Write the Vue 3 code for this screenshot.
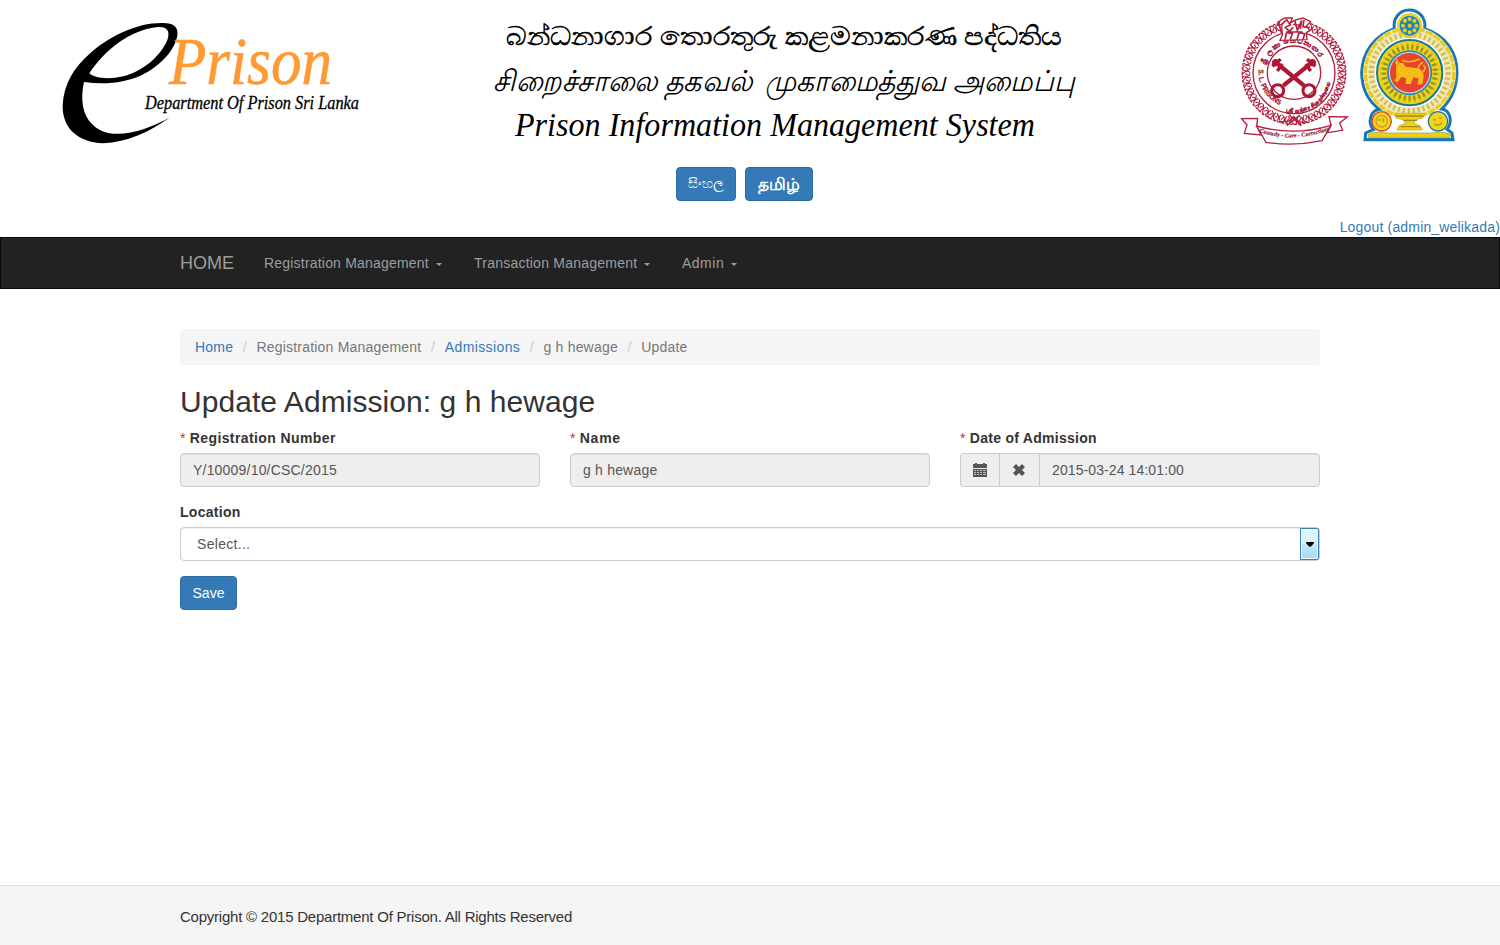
<script setup>
const menus = [
  { label: 'Registration Management', cls: 'm-reg' },
  { label: 'Transaction Management', cls: 'm-tra' },
  { label: 'Admin', cls: 'm-adm' },
]
const crumbs = [
  { label: 'Home', link: true },
  { label: 'Registration Management' },
  { label: 'Admissions', link: true },
  { label: 'g h hewage' },
  { label: 'Update' },
]
const leaves = Array.from({ length: 44 }, (_, i) => -68 + i * (316 / 43))
const petals = Array.from({ length: 8 }, (_, i) => i * 45)
</script>

<template>
  <div class="page">
    <svg class="banner" viewBox="0 0 1500 160" width="1500" height="160">
      <!-- ePrison logo -->
      <g transform="translate(50 10) scale(.33333)">
        <path fill-rule="evenodd" d="M360 322 C300 366 232 397 160 400 C82 398 36 352 38 286 C41 222 72 172 118 132 C177 79 258 39 335 39 C371 38 386 51 382 77 C374 123 329 168 276 195 C225 219 163 225 102 216 C87 286 104 337 154 362 C210 386 292 361 360 322 Z M118 190 C166 117 244 60 318 52 C350 48 362 62 352 90 C333 137 279 184 220 199 C176 209 137 206 118 190 Z" />
      </g>
      <text x="169" y="84" class="serif it" font-size="68" fill="#f93" stroke="#f93" stroke-width=".6" textLength="163" lengthAdjust="spacingAndGlyphs">Prison</text>
      <text x="145" y="109" class="serif it" font-size="19" stroke="#000" stroke-width=".3" textLength="214" lengthAdjust="spacingAndGlyphs">Department Of Prison Sri Lanka</text>

      <!-- Title in three languages -->
      <text x="506" y="45" class="serif" font-size="26" stroke="#000" stroke-width=".6" textLength="556" lengthAdjust="spacingAndGlyphs">බන්ධනාගාර තොරතුරු කළමනාකරණ පද්ධතිය</text>
      <text x="493" y="91" class="serif it" font-size="29" textLength="260" lengthAdjust="spacingAndGlyphs">சிறைச்சாலை தகவல்</text>
      <text x="765" y="91" class="serif it" font-size="29" textLength="310" lengthAdjust="spacingAndGlyphs">முகாமைத்துவ அமைப்பு</text>
      <text x="515" y="136" class="serif it" font-size="33" textLength="520" lengthAdjust="spacingAndGlyphs">Prison Information Management System</text>

      <!-- Prisons department crest -->
      <g transform="translate(1230 0) scale(.33333)" fill="none" stroke="#b3203f">
        <circle cx="192" cy="218" r="155" stroke-width="4" stroke-dasharray="9 4" />
        <circle cx="192" cy="218" r="123" stroke-width="4" />
        <g stroke-width="3.4">
          <path v-for="a in leaves" :key="a" :transform="`rotate(${a} 192 218)`" d="M323 228 Q332 214 346 222 M324 214 Q336 224 348 206 M330 206 L338 211" />
        </g>
        <circle cx="192" cy="218" r="80" stroke-width="4" />
        <g stroke="#b01632">
          <g stroke-width="13">
            <path d="M134 184 L222 257 M250 184 L160 257" />
            <path d="M127 199 L152 178 M142 213 L157 192 M256 199 L231 178 M242 213 L227 192" stroke-width="10" />
          </g>
          <circle cx="237" cy="272" r="18" stroke-width="9" />
          <circle cx="143" cy="272" r="18" stroke-width="9" />
          <circle cx="137" cy="188" r="7" stroke-width="8" />
          <circle cx="247" cy="188" r="7" stroke-width="8" />
        </g>
        <path id="arcTop" d="M107 194 A88 88 0 0 1 280 220" stroke="none" />
        <path id="arcLeft" d="M86 209 A106 106 0 0 0 164 320" stroke="none" />
        <path id="arcBottom" d="M168 336 A114 114 0 0 0 304 224" stroke="none" />
        <g fill="#a81c38" stroke="#a81c38" stroke-width=".8" class="sans" font-weight="700">
          <text font-size="21"><textPath href="#arcTop" textLength="205">ශ්‍රී ලංකා බන්ධනාගාර</textPath></text>
          <text font-size="22"><textPath href="#arcLeft" textLength="132" lengthAdjust="spacingAndGlyphs">S. L. PRISONS</textPath></text>
          <text font-size="17"><textPath href="#arcBottom" textLength="178" lengthAdjust="spacingAndGlyphs">ஸ்ரீ லங்கா சிறைச்சாலை</textPath></text>
        </g>
        <path fill="#fff" stroke-width="4" d="M150 121 L157 106 L155 73 L143 76 L151 61 L165 54 L187 54 L181 69 L195 60 L219 54 L242 65 L229 78 L240 91 L229 98 L231 119 Z" />
        <path stroke-width="5" d="M144 63 L155 100 M155 73 L170 59 L181 74 L166 82 L178 94 L190 82 M194 61 L202 91 L215 61 L211 87 M222 60 L219 80 L236 83 M165 119 L170 97 L187 101 L181 119 M201 119 L207 98 L224 101 L219 119 M170 96 H218 M190 74 L208 75" />
        <path stroke-width="4" d="M170 377 L209 345 M178 345 L214 378 M153 364 Q178 371 191 350 Q207 374 232 364" />
        <path fill="#fff" stroke-width="4" d="M83 355 L35 356 L51 375 L43 400 L93 405 L80 378 Z M297 350 L352 351 L329 369 L338 391 L291 398 L303 376 Z" />
        <path fill="#fff" stroke-width="4" d="M80 378 L108 427 Q192 440 276 422 L303 376 Q192 410 80 378 Z" />
        <path id="motto" d="M88 396 Q192 433 310 386" stroke="none" />
        <text fill="#911b33" stroke="#911b33" stroke-width=".5" class="serif" font-weight="700" font-size="17.5"><textPath href="#motto">Custody - Care - Corrections</textPath></text>
      </g>

      <!-- State emblem -->
      <g transform="translate(1230 0) scale(.33333)" fill="none">
        <path fill="#fff" stroke="#1976b5" stroke-width="9" d="M493 86 C488 55 509 30 537 30 C567 30 589 54 584 86 C648 107 682 158 681 218 C680 264 663 300 635 327 C663 332 668 367 651 388 L666 399 L669 419 H405 L407 399 L430 389 C412 367 421 331 449 328 C415 304 396 266 395 218 C397 157 433 107 493 86 Z" />
        <circle cx="539" cy="218" r="122" stroke="#efe7b6" stroke-width="34" />
        <circle cx="539" cy="218" r="133" stroke="#e9cb24" stroke-width="10" stroke-dasharray="22 4" />
        <circle cx="539" cy="218" r="115" stroke="#d3b84c" stroke-width="16" stroke-dasharray="6 9" />
        <circle cx="539" cy="218" r="98" fill="#f2d412" stroke="#157c91" stroke-width="6" />
        <circle cx="539" cy="218" r="79" stroke="#96922c" stroke-width="19" stroke-dasharray="7 8" />
        <circle cx="539" cy="218" r="86" stroke="#efd52a" stroke-width="3" />
        <circle cx="539" cy="218" r="61" fill="#e8442d" stroke="#b8dbe8" stroke-width="4" />
        <circle cx="539" cy="218" r="65" stroke="#2581bb" stroke-width="5" />
        <path fill="#f6bd16" d="M500 205 L507 190 L518 188 L527 200 L563 205 Q581 211 581 230 L577 253 L562 254 L566 235 L550 232 L542 252 L526 252 L529 235 L514 230 L503 247 L493 242 L505 222 L500 214 Z" />
        <path stroke="#f3b718" stroke-width="5" d="M501 229 V178 M495 188 H509 M516 180 Q535 192 569 177 M565 207 Q565 194 578 187 M578 216 Q591 205 580 195" />
        <circle cx="539" cy="77" r="34" fill="#1f83bd" stroke="#ead128" stroke-width="8" />
        <circle cx="539" cy="77" r="6" fill="#e4cb2c" />
        <circle v-for="p in petals" :key="p" cx="539" cy="57" r="6" fill="#edcd24" :transform="`rotate(${p} 539 77)`" />
        <path fill="#f0d015" stroke="#c0a618" stroke-width="2" d="M494 340 H584 L578 354 L557 359 L552 369 L572 379 L577 390 H501 L506 378 L527 369 L519 359 L499 354 Z" />
        <path stroke="#9d8c20" stroke-width="4" d="M498 348 H580 M520 361 H561 M512 380 H569" />
        <circle cx="455" cy="364" r="29" fill="#f3d61a" stroke="#cf4734" stroke-width="4" />
        <circle cx="455" cy="364" r="17" stroke="#d39b20" stroke-width="4" />
        <circle cx="624" cy="364" r="29" fill="#f3d61a" stroke="#1974a6" stroke-width="4" />
        <path stroke="#ba9b1d" stroke-width="5" d="M610 359 H618 M627 354 H636 M613 373 Q626 380 637 368 M445 360 H453 M460 355 V367" />
        <path fill="#edcf18" stroke="#8f9a35" stroke-width="2" d="M414 404 Q433 393 473 399 H604 Q643 393 661 404 L660 412 H415 Z" />
        <path stroke="#1976b5" stroke-width="6" d="M404 418 H671" />
      </g>
    </svg>

    <div class="langs">
      <button class="btn si">සිංහල</button>
      <button class="btn ta">தமிழ்</button>
    </div>
    <div class="logout"><a>Logout (admin_welikada)</a></div>

    <nav class="navbar">
      <a class="brand">HOME</a>
      <a v-for="m in menus" :key="m.label" class="menu" :class="m.cls"><span>{{ m.label }}</span><i class="caret"></i></a>
    </nav>

    <main class="container">
      <ol class="breadcrumb">
        <li v-for="(c, i) in crumbs" :key="c.label" :class="'c' + i"><a v-if="c.link">{{ c.label }}</a><span v-else>{{ c.label }}</span></li>
      </ol>
      <h2><span>Update Admission: g h hewage</span></h2>
      <div class="row">
        <div class="group">
          <label><em>*</em> <span class="l-reg">Registration Number</span></label>
          <div class="control ro"><span>Y/10009/10/CSC/2015</span></div>
        </div>
        <div class="group">
          <label><em>*</em> <span class="l-name">Name</span></label>
          <div class="control ro"><span>g h hewage</span></div>
        </div>
        <div class="group">
          <label><em>*</em> <span class="l-date">Date of Admission</span></label>
          <div class="input-group">
            <span class="addon">
              <svg width="14" height="15" viewBox="0 0 14 15" shape-rendering="crispEdges">
                <path fill="#555" d="M0 1H2V0H4V1H10V0H12V1H14V5H0ZM0 6H14V14H0Z" />
                <path fill="#bbb" d="M1 7H3V8H1ZM4 7H6V8H4ZM7 7H9V8H7ZM10 7H13V8H10ZM1 9H3V10H1ZM4 9H6V10H4ZM7 9H9V10H7ZM10 9H13V10H10ZM1 11H3V12H1ZM4 11H6V12H4ZM7 11H9V12H7ZM10 11H13V12H10Z" />
              </svg>
            </span>
            <span class="addon">
              <svg width="12" height="12" viewBox="0 0 12 12"><path fill="#555" d="M3 0 6 3 9 0 12 3 9 6 12 9 9 12 6 9 3 12 0 9 3 6 0 3Z" /></svg>
            </span>
            <div class="control ro date"><span>2015-03-24 14:01:00</span></div>
          </div>
        </div>
      </div>
      <div class="group">
        <label><span class="l-loc">Location</span></label>
        <div class="control select"><span>Select...</span><span class="arrow"><svg width="8" height="5" viewBox="0 0 8 5"><path d="M0 0H8V1L5 4.5H3L0 1Z" /></svg></span></div>
      </div>
      <button class="btn save"><span>Save</span></button>
    </main>

    <footer><p>Copyright © 2015 Department Of Prison. All Rights Reserved</p></footer>
  </div>
</template>

<style>
body { margin: 0; background: #fff; }
</style>

<style scoped>
.page { width: 1500px; height: 945px; display: flex; flex-direction: column; overflow: hidden; font: 14px/20px "Liberation Sans", Arial, sans-serif; color: #333; }
.page * { box-sizing: border-box; }
.banner { display: block; flex: none; }
.serif { font-family: "Liberation Serif", serif; }
.sans { font-family: "Liberation Sans", sans-serif; }
.it { font-style: italic; }
a { color: #337ab7; text-decoration: none; }
.langs { display: flex; justify-content: center; gap: 9px; height: 57px; padding: 7px 11px 0 0; }
.btn { height: 34px; padding: 0; border: 1px solid #2e6da4; border-radius: 4px; background: #337ab7; color: #fff; font: 14px/20px "Liberation Sans", sans-serif; }
.si { width: 60px; font-size: 13.5px; }
.ta { width: 68px; font-size: 16.5px; font-weight: 700; }
.logout { height: 20px; text-align: right; letter-spacing: .17px; white-space: nowrap; }
.navbar { display: flex; align-items: center; height: 52px; flex: none; padding-left: 179px; background: #222; border: 1px solid #080808; color: #9d9d9d; }
.navbar a { color: #9d9d9d; }
.brand { width: 84px; font-size: 18px; }
.menu { display: flex; align-items: center; letter-spacing: .5px; }
.m-reg { width: 210px; letter-spacing: .2px; }
.m-tra { width: 208px; letter-spacing: .23px; }
.caret { width: 0; height: 0; margin: 2px 0 0 7px; border: 3px solid transparent; border-top-color: #9d9d9d; border-bottom: 0; }
.container { width: 1140px; margin: 40px auto 0; flex: 1; }
.breadcrumb { display: flex; align-items: center; height: 36px; margin: 0; padding: 0 15px; list-style: none; background: #f5f5f5; border-radius: 4px; color: #777; letter-spacing: .2px; }
.breadcrumb li + li::before { content: "/"; color: #ccc; padding: 0 9.6px; }
.c2 { letter-spacing: .38px; }
h2 { margin: 20px 0 10px; font-size: 30px; line-height: 33px; font-weight: 400; letter-spacing: .06px; }
.row { display: grid; grid-template-columns: repeat(3, 360px); gap: 30px; }
.group { margin-bottom: 15px; }
.row .group { margin-bottom: 15px; }
label { display: block; height: 20px; margin-bottom: 5px; font-weight: 700; letter-spacing: .4px; }
label em { color: #a94442; font-style: normal; font-weight: 400; letter-spacing: 0; }
.l-name { letter-spacing: .75px; }
.l-date, .l-loc { letter-spacing: .28px; }
.control { display: flex; align-items: center; height: 34px; padding: 0 12px; border: 1px solid #ccc; border-radius: 4px; box-shadow: inset 0 1px 1px rgba(0, 0, 0, .075); color: #555; letter-spacing: .3px; }
.ro { background: #eee; letter-spacing: .2px; }
.input-group { display: flex; }
.addon { display: flex; align-items: center; justify-content: center; width: 39px; height: 34px; border: 1px solid #ccc; border-right: 0; background: #eee; }
.addon:first-child { border-radius: 4px 0 0 4px; }
.addon + .addon { width: 40px; padding-right: 1px; }
.date { flex: 1; border-radius: 0 4px 4px 0; letter-spacing: .1px; }
.select { justify-content: space-between; padding: 0 0 0 16px; }
.arrow { display: flex; align-items: center; justify-content: center; width: 19px; height: 32px; border: 1px solid #3c7fb1; border-radius: 0 2px 2px 0; background: linear-gradient(#e3f4fc 0%, #d6effc 48%, #bee6fd 52%, #a7d9f5 100%); box-shadow: inset 0 0 0 1px #eefaff; }
.save { display: block; width: 57px; }
footer { height: 60px; flex: none; padding-left: 180px; background: #f5f5f5; border-top: 1px solid #ddd; }
footer p { margin: 21px 0 0; font-size: 15px; letter-spacing: -.23px; white-space: nowrap; }
</style>
